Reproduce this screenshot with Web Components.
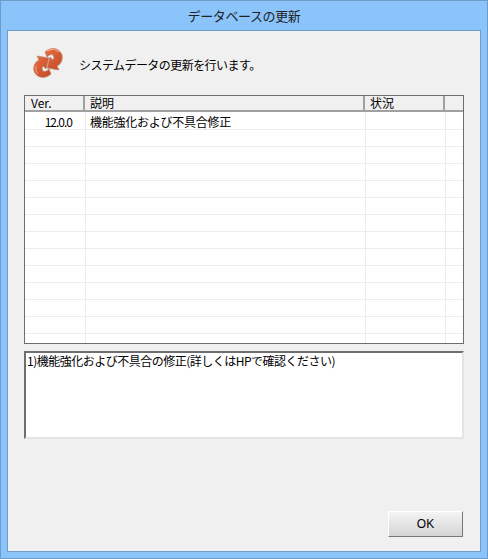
<!DOCTYPE html>
<html>
<head>
<meta charset="utf-8">
<style>
html, body { margin: 0; height: 100%; }
body { font-family: "Noto Sans CJK JP", "Liberation Sans", sans-serif; }
</style>
</head>
<body>
<update-dialog title-text="データベースの更新">
    <div slot="head" style="display:contents">
        <sync-icon></sync-icon>
        <span style="letter-spacing:-.55px;padding-top:2px">システムデータの更新を行います。</span>
    </div>
    <version-table slot="table"></version-table>
    <detail-box slot="detail">1)機能強化および不具合の修正(詳しくはHPで確認ください)</detail-box>
    <ok-button slot="actions">OK</ok-button>
</update-dialog>

<script>
class UpdateDialog extends HTMLElement {
    constructor() {
        super();
        this.attachShadow({ mode: 'open' });
    }

    connectedCallback() {
        const title = this.getAttribute('title-text') || '';
        this.shadowRoot.innerHTML = `
            <style>
                :host {
                    display: flex;
                    flex-direction: column;
                    box-sizing: border-box;
                    width: 488px;
                    height: 559px;
                    background: #8ac4fa;
                    border: 1px solid #6d9cc8;
                    padding: 0 6px 6px 6px;
                }
                .title {
                    height: 29px;
                    flex: none;
                    display: flex;
                    align-items: center;
                    justify-content: center;
                    font-size: 13px;
                    letter-spacing: -.4px;
                    color: #222;
                }
                .client {
                    flex: 1;
                    display: flex;
                    flex-direction: column;
                    background: #f0f0f0;
                    border: 1px solid #6d9cc8;
                    padding: 0 16px 14px 16px;
                    font-size: 12px;
                    color: #000;
                }
                .head {
                    height: 64px;
                    flex: none;
                    display: flex;
                    align-items: center;
                    gap: 15px;
                    padding-left: 8px;
                }
                .actions {
                    margin-top: auto;
                    display: flex;
                    justify-content: flex-end;
                    padding-right: 1px;
                }
            </style>
            <div class="title">${title}</div>
            <div class="client">
                <div class="head"><slot name="head"></slot></div>
                <slot name="table"></slot>
                <slot name="detail"></slot>
                <div class="actions"><slot name="actions"></slot></div>
            </div>
        `;
    }
}

class SyncIcon extends HTMLElement {
    constructor() {
        super();
        this.attachShadow({ mode: 'open' });
        this.shadowRoot.innerHTML = `
            <style>
                :host { display: block; width: 32px; height: 32px; flex: none; }
                svg { display: block; }
            </style>
            <svg width="32" height="32" viewBox="0 0 32 32">
                <defs>
                    <linearGradient id="a" x1="0" y1="0" x2="1" y2="1">
                        <stop offset="0" stop-color="#e96c42"/>
                        <stop offset="1" stop-color="#c24a25"/>
                    </linearGradient>
                    <filter id="s"><feGaussianBlur stdDeviation=".3"/></filter>
                </defs>
                <g filter="url(#s)">
                    <path d="M2 24C1 19 3 15 7 13L5 9L17 11L14 22L11 19C10 20 10 22 11 24C13 25 15 24 17 22L19 27C14 32 5 32 2 24Z" fill="url(#a)" stroke="#b88a74" stroke-width=".7"/>
                    <path d="M30 8C31 13 29 17 25 19L27 23L15 21L18 10L21 13C22 12 22 10 21 8C19 7 17 8 15 10L13 5C18 0 27 0 30 8Z" fill="url(#a)" stroke="#b88a74" stroke-width=".7"/>
                    <path d="M15 4C19 2 24 2 27 5" fill="none" stroke="#f4a486" stroke-width="1.200"/>
                    <path d="M4 19C3.500 22 4 25 6 27" fill="none" stroke="#f4a486" stroke-width="1"/>
                </g>
            </svg>
        `;
    }
}

class VersionTable extends HTMLElement {
    constructor() {
        super();
        this.attachShadow({ mode: 'open' });
    }

    connectedCallback() {
        const rows = [['12.0.0', '機能強化および不具合修正', '']];
        while (rows.length < 14) rows.push(['', '', '']);
        const body = rows.map((r, i) => `
            <div class="cell ver ${i ? '' : 'first'}">${r[0]}</div>
            <div class="cell line ${i ? '' : 'first'}">${r[1]}</div>
            <div class="cell line ${i ? '' : 'first'}">${r[2]}</div>
            <div class="cell line ${i ? '' : 'first'}"></div>
        `).join('');
        this.shadowRoot.innerHTML = `
            <style>
                :host {
                    display: block;
                    box-sizing: border-box;
                    height: 249px;
                    background: #fff;
                    border: 1px solid #6e6e6e;
                    overflow: hidden;
                    font-size: 12px;
                }
                .grid {
                    display: grid;
                    grid-template-columns: 60px 280px 80px 1fr;
                }
                .hd {
                    box-sizing: border-box;
                    height: 16px;
                    line-height: 14px;
                    background: #f0f0f0;
                    border-right: 2px solid #a0a0a0;
                    border-bottom: 2px solid #a0a0a0;
                    padding-left: 5px;
                }
                .hd.end { border-right: 0; }
                .cell {
                    box-sizing: border-box;
                    height: 17px;
                    line-height: 16px;
                    padding-left: 4px;
                    border-bottom: 1px solid #ececec;
                    white-space: nowrap;
                    letter-spacing: -.25px;
                }
                .cell.first { height: 18px; line-height: 19px; }
                .line { border-left: 1px solid #ececec; }
                .ver {
                    text-align: right;
                    padding: 0 13px 0 0;
                    letter-spacing: -1px;
                }
            </style>
            <div class="grid">
                <div class="hd" style="padding-left:6px">Ver.</div>
                <div class="hd">説明</div>
                <div class="hd">状況</div>
                <div class="hd end"></div>
                ${body}
            </div>
        `;
    }
}

class DetailBox extends HTMLElement {
    constructor() {
        super();
        this.attachShadow({ mode: 'open' });
        this.shadowRoot.innerHTML = `
            <style>
                :host {
                    display: block;
                    box-sizing: border-box;
                    height: 88px;
                    margin-top: 7px;
                    background: #fff;
                    border: 2px solid #e4e4e4;
                    border-top-color: #6e6e6e;
                    border-left-color: #6e6e6e;
                    padding: 0 1px;
                    font-size: 12px;
                    line-height: 16px;
                    letter-spacing: -.5px;
                }
            </style>
            <slot></slot>
        `;
    }
}

class OkButton extends HTMLElement {
    constructor() {
        super();
        this.attachShadow({ mode: 'open' });
        this.shadowRoot.innerHTML = `
            <style>
                :host {
                    display: flex;
                    align-items: center;
                    justify-content: center;
                    box-sizing: border-box;
                    width: 75px;
                    height: 26px;
                    background: linear-gradient(#f4f4f4, #d4d4d4);
                    border: 1px solid #fff;
                    border-right: 1px solid #777;
                    border-bottom: 1px solid #777;
                    font-size: 12px;
                    color: #000;
                    font-family: "Liberation Sans", sans-serif;
                }
            </style>
            <slot></slot>
        `;
    }
}

customElements.define('update-dialog', UpdateDialog);
customElements.define('sync-icon', SyncIcon);
customElements.define('version-table', VersionTable);
customElements.define('detail-box', DetailBox);
customElements.define('ok-button', OkButton);
</script>
</body>
</html>
